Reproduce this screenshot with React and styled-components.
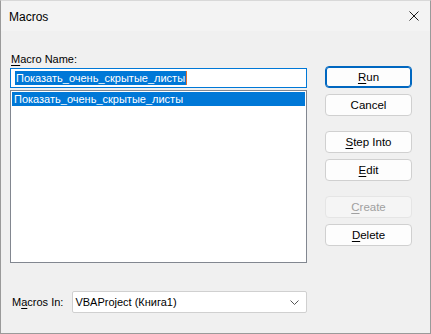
import React from "react";
import styled, { createGlobalStyle } from "styled-components";

const GlobalStyle = createGlobalStyle`
  html, body {
    margin: 0;
    padding: 0;
    background: #f0f0f0;
  }
  body {
    font-family: "Liberation Sans", Arial, sans-serif;
    font-size: 11px;
    color: #000;
  }
`;

const Window = styled.div`
  width: 431px;
  height: 334px;
  box-sizing: border-box;
  border: 1px solid #9a9a9a;
  border-top-color: #d8d8d8;
  background: #f0f0f0;
  display: flex;
  flex-direction: column;
`;

const TitleBar = styled.div`
  height: 30px;
  background: #f3f3f3;
  display: flex;
  align-items: center;
  justify-content: space-between;
  padding: 0 10px 0 8px;
`;

const Title = styled.span`
  font-size: 12px;
  line-height: 16px;
  margin-top: 1px;
`;

const CloseIcon = styled.svg`
  width: 10px;
  height: 10px;
  margin-right: 1px;
`;

const Body = styled.div`
  flex: 1;
  display: flex;
  gap: 18px;
  padding: 20px 0 0 9px;
`;

const LeftColumn = styled.div`
  width: 297px;
  display: flex;
  flex-direction: column;
`;

const Label = styled.div`
  line-height: 16px;
  padding-left: 1px;
  margin-bottom: 1px;
  white-space: nowrap;
`;

const Key = styled.span`
  text-decoration: underline;
  text-underline-offset: 2px;
`;

const NameInput = styled.div`
  height: 20px;
  box-sizing: border-box;
  border: 1px solid #0078d7;
  background: #fff;
  display: flex;
  align-items: center;
  padding-left: 4px;
`;

const Selected = styled.span`
  background: #0078d7;
  color: #fff;
  line-height: 14px;
  padding: 0 1px;
  white-space: nowrap;
`;

const Caret = styled.span`
  width: 1px;
  height: 14px;
  background: #e07030;
`;

const List = styled.div`
  margin-top: 2px;
  height: 173px;
  box-sizing: border-box;
  border: 1px solid #828790;
  background: #fff;
  padding: 1px;
`;

const ListRow = styled.div`
  height: 14px;
  line-height: 14px;
  padding-left: 2px;
  white-space: nowrap;
  background: ${(p) => (p.active ? "#0078d7" : "transparent")};
  color: ${(p) => (p.active ? "#fff" : "#000")};
`;

const BottomRow = styled.div`
  margin-top: 28px;
  display: flex;
  align-items: center;
  gap: 9px;
`;

const InLabel = styled.span`
  padding-left: 2px;
  line-height: 16px;
  white-space: nowrap;
  flex-shrink: 0;
`;

const Select = styled.div`
  width: 236px;
  height: 22px;
  box-sizing: border-box;
  border: 1px solid #d0d0d0;
  border-radius: 2px;
  background: #fff;
  display: flex;
  align-items: center;
  justify-content: space-between;
  padding: 0 7px 0 2px;
  white-space: nowrap;
`;

const Chevron = styled.svg`
  width: 9px;
  height: 5px;
`;

const ButtonColumn = styled.div`
  width: 87px;
  padding-top: 15px;
  display: flex;
  flex-direction: column;
`;

const Button = styled.div`
  height: 22px;
  box-sizing: border-box;
  border-radius: 4px;
  border: 1px solid ${(p) => (p.primary ? "#0067c0" : p.disabled ? "#e5e5e5" : "#d0d0d0")};
  box-shadow: ${(p) => (p.primary ? "inset 0 0 0 1px #0067c0" : "none")};
  background: ${(p) => (p.disabled ? "#f5f5f5" : "#fdfdfd")};
  color: ${(p) => (p.disabled ? "#a0a0a0" : "#000")};
  display: flex;
  align-items: center;
  justify-content: center;
  margin-top: ${(p) => p.gap}px;
  line-height: 16px;
  white-space: nowrap;
  font-size: 11.5px;
`;

const buttons = [
  { key: "R", rest: "un", gap: 0, primary: true },
  { key: "", rest: "Cancel", gap: 6 },
  { key: "S", rest: "tep Into", gap: 15 },
  { key: "E", rest: "dit", gap: 6 },
  { key: "C", rest: "reate", gap: 15, disabled: true },
  { key: "D", rest: "elete", gap: 6 },
];

export default function App() {
  const macro = "Показать_очень_скрытые_листы";
  return (
    <>
      <GlobalStyle />
      <Window>
        <TitleBar>
          <Title>Macros</Title>
          <CloseIcon viewBox="0 0 10 10">
            <path d="M0.5 0.5 L9.5 9.5 M9.5 0.5 L0.5 9.5" stroke="#1a1a1a" strokeWidth="1" fill="none" />
          </CloseIcon>
        </TitleBar>
        <Body>
          <LeftColumn>
            <Label>
              <Key>M</Key>acro Name:
            </Label>
            <NameInput>
              <Selected>{macro}</Selected>
              <Caret />
            </NameInput>
            <List>
              <ListRow active>{macro}</ListRow>
            </List>
            <BottomRow>
              <InLabel>
                M<Key>a</Key>cros In:
              </InLabel>
              <Select>
                <span>VBAProject (Книга1)</span>
                <Chevron viewBox="0 0 9 5">
                  <path d="M0.5 0.5 L4.5 4.5 L8.5 0.5" stroke="#555" strokeWidth="1" fill="none" />
                </Chevron>
              </Select>
            </BottomRow>
          </LeftColumn>
          <ButtonColumn>
            {buttons.map((b, i) => (
              <Button key={i} gap={b.gap} primary={b.primary} disabled={b.disabled}>
                <span>
                  {b.key && <Key>{b.key}</Key>}
                  {b.rest}
                </span>
              </Button>
            ))}
          </ButtonColumn>
        </Body>
      </Window>
    </>
  );
}
